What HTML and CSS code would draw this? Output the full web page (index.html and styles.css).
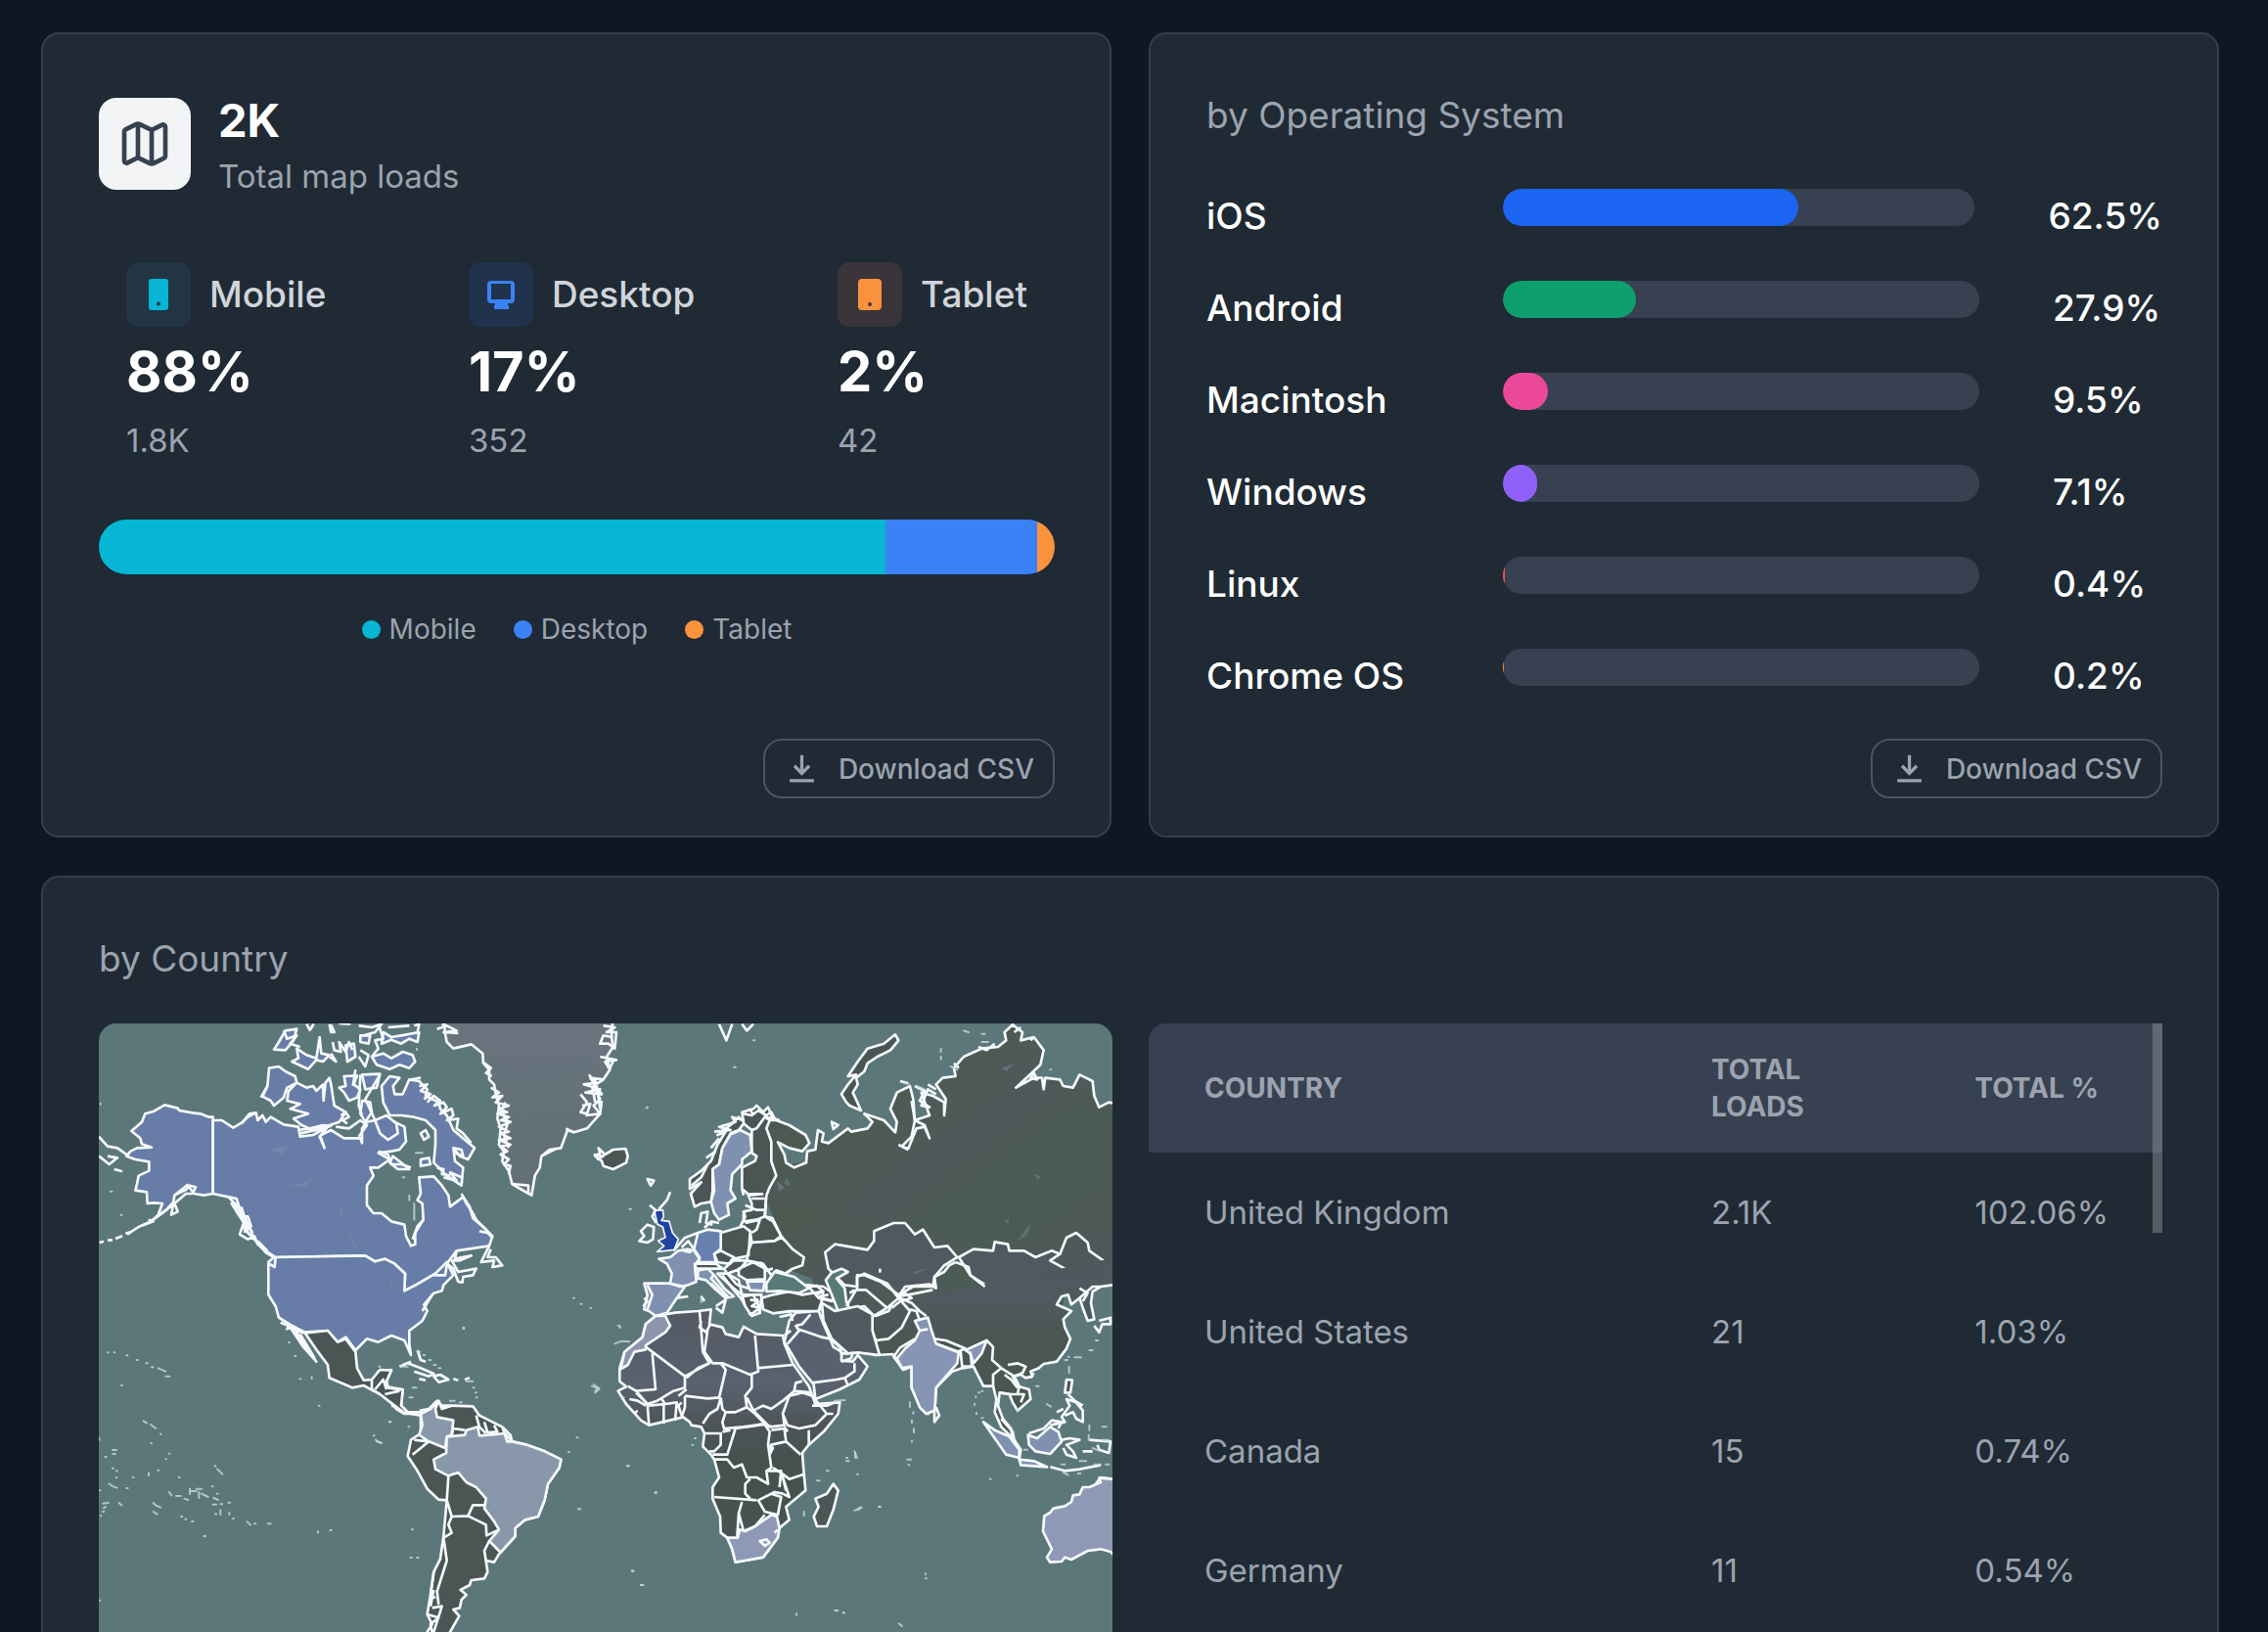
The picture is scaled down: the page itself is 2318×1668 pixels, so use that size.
FILE: index.html
```html
<!DOCTYPE html>
<html lang="en">
<head>
<meta charset="utf-8">
<meta name="viewport" content="width=device-width, initial-scale=1">
<title>Map loads</title>
<link rel="stylesheet" href="styles.css">
</head>
<body>
<svg class="defs" aria-hidden="true">
  <symbol id="i-download" viewBox="0 0 24 24"><path d="M12 2V15M6.500 10l5.500 5.500L17.500 10M3 21h18" fill="none" stroke="currentColor" stroke-width="2.400"/></symbol>
</svg>
<main class="page">
  <section class="card">
    <header class="summary">
      <span class="summary-icon">
        <svg viewBox="0 0 24 24" aria-hidden="true"><path d="M14.106 5.553a2 2 0 0 0 1.788 0l3.659-1.830A1 1 0 0 1 21 4.619v12.764a1 1 0 0 1-.553.894l-4.553 2.277a2 2 0 0 1-1.788 0l-4.212-2.106a2 2 0 0 0-1.788 0l-3.659 1.830A1 1 0 0 1 3 19.381V6.618a1 1 0 0 1 .553-.894l4.553-2.277a2 2 0 0 1 1.788 0zM15 5.764v15M9 3.236v15"/></svg>
      </span>
      <div>
        <h2 class="summary-value">2K</h2>
        <p class="muted">Total map loads</p>
      </div>
    </header>
    <div class="stats">
      <div class="stat">
        <div class="stat-head"><span class="tile tile-mobile"><svg viewBox="0 0 38 38" aria-hidden="true"><path fill-rule="evenodd" d="M12 3h14a3 3 0 0 1 3 3v26a3 3 0 0 1-3 3H12a3 3 0 0 1-3-3V6a3 3 0 0 1 3-3zm7 23.500a2 2 0 1 0 0 4 2 2 0 0 0 0-4z"/></svg></span>Mobile</div>
        <strong class="stat-value">88%</strong>
        <span class="muted">1.8K</span>
      </div>
      <div class="stat">
        <div class="stat-head"><span class="tile tile-desktop"><svg viewBox="0 0 38 38" aria-hidden="true"><path fill-rule="evenodd" d="M9 5h20a4 4 0 0 1 4 4v15a4 4 0 0 1-4 4h-3v2h1v4H12v-4h1v-2H9a4 4 0 0 1-4-4V9a4 4 0 0 1 4-4zm0 3v16h20V8z"/></svg></span>Desktop</div>
        <strong class="stat-value">17%</strong>
        <span class="muted">352</span>
      </div>
      <div class="stat">
        <div class="stat-head"><span class="tile tile-tablet"><svg viewBox="0 0 38 38" aria-hidden="true"><path fill-rule="evenodd" d="M11 3h16a4 4 0 0 1 4 4v24a4 4 0 0 1-4 4H11a4 4 0 0 1-4-4V7a4 4 0 0 1 4-4zm8 24a2 2 0 1 0 0 4 2 2 0 0 0 0-4z"/></svg></span>Tablet</div>
        <strong class="stat-value">2%</strong>
        <span class="muted">42</span>
      </div>
    </div>
    <div class="split-bar">
      <span class="bg-mobile" style="flex-grow:88"></span>
      <span class="bg-desktop" style="flex-grow:17"></span>
      <span class="bg-tablet" style="flex-grow:2"></span>
    </div>
    <ul class="legend">
      <li><i class="dot bg-mobile"></i>Mobile</li>
      <li><i class="dot bg-desktop"></i>Desktop</li>
      <li><i class="dot bg-tablet"></i>Tablet</li>
    </ul>
    <button class="download" type="button"><svg aria-hidden="true"><use href="#i-download"/></svg>Download CSV</button>
  </section>

  <section class="card">
    <h2 class="card-title">by Operating System</h2>
    <ul class="os-list">
      <li><span class="os-name">iOS</span><span class="track"><span class="fill ios" style="width:62.5%"></span></span><span class="os-share">62.5%</span></li>
      <li><span class="os-name">Android</span><span class="track"><span class="fill android" style="width:27.9%"></span></span><span class="os-share">27.9%</span></li>
      <li><span class="os-name">Macintosh</span><span class="track"><span class="fill mac" style="width:9.5%"></span></span><span class="os-share">9.5%</span></li>
      <li><span class="os-name">Windows</span><span class="track"><span class="fill windows" style="width:7.1%"></span></span><span class="os-share">7.1%</span></li>
      <li><span class="os-name">Linux</span><span class="track"><span class="fill linux" style="width:0.4%"></span></span><span class="os-share">0.4%</span></li>
      <li><span class="os-name">Chrome OS</span><span class="track"><span class="fill chrome" style="width:0.2%"></span></span><span class="os-share">0.2%</span></li>
    </ul>
    <button class="download" type="button"><svg aria-hidden="true"><use href="#i-download"/></svg>Download CSV</button>
  </section>

  <section class="card card-wide">
    <h2 class="card-title">by Country</h2>
    <div class="country">
      <svg class="map" viewBox="33 48 3108 2100" role="img" aria-label="World map of loads by country">
        <defs>
          <linearGradient id="steppe" x1="0" y1="0" x2="1" y2="1"><stop offset="0" stop-color="#4b5752"/><stop offset=".3" stop-color="#4c5a52"/><stop offset=".5" stop-color="#4e5a5a"/><stop offset=".65" stop-color="#4c5b54"/><stop offset="1" stop-color="#4d585a"/></linearGradient>
          <linearGradient id="asia" x1="0" y1="0" x2="0" y2="1"><stop offset="0" stop-color="#4e595e"/><stop offset=".25" stop-color="#4e5a5e"/><stop offset=".5" stop-color="#4a5651"/><stop offset="1" stop-color="#4a5651"/></linearGradient>
          <linearGradient id="africa" x1="0" y1="0" x2="0" y2="1"><stop offset="0" stop-color="#535a64"/><stop offset=".3" stop-color="#5a6170"/><stop offset=".45" stop-color="#4d5559"/><stop offset=".6" stop-color="#46514d"/><stop offset="1" stop-color="#485452"/></linearGradient>
          <linearGradient id="ice" x1="0" y1="0" x2="0" y2="1"><stop offset="0" stop-color="#69747f"/><stop offset="1" stop-color="#626f74"/></linearGradient>
        </defs>

        <!-- North America -->
        <g class="land blue">
          <path d="M383 335L370 335 345 325 320 322 280 315 275 308 235 298 200 318 175 325 165 350 133 378 160 400 165 418 195 428 150 430 130 440 118 455 145 465 187 472 187 500 155 515 150 540 145 560 180 565 182 600 200 598 228 600 215 635 200 650 240 620 262 595 265 575 305 543 325 570 355 575 383 570z"/>
          <path d="M383 345L410 345 445 368 475 350 490 335 515 322 520 345 535 330 545 350 560 335 600 358 645 365 650 395 690 390 735 365 710 395 725 430 712 392 745 375 785 400 835 400 840 415 840 370 855 350 880 345 900 390 925 400 945 380 940 350 970 365 975 410 955 435 930 440 890 445 925 465 890 490 865 490 875 515 855 545 855 605 875 630 900 630 930 655 970 665 975 700 990 730 1003 725 1003 690 1028 650 1025 600 1010 590 1020 570 1015 520 1060 517 1085 545 1105 575 1110 610 1150 580 1170 610 1180 645 1215 675 1240 700 1230 730 1130 745 1100 785 1065 815 1005 850 970 868 972 815 940 785 910 770 880 778 850 760 570 765 545 750 510 710 480 640 450 600 430 580 383 570z"/>
          <path d="M570 765L850 760 880 778 910 770 940 785 972 815 970 868 1005 850 1065 815 1100 780 1120 820 1090 850 1085 868 1060 875 1030 910 1040 930 1025 960 985 990 985 1030 990 1065 970 1020 930 1005 890 1025 855 1015 820 1050 790 1010 765 1025 735 990 665 995 620 972 585 950 575 915 553 880 553 780z"/>
          <path d="M555 185L585 180 605 195 635 210 640 230 610 245 600 275 570 300 560 285 535 272 550 240zM640 230L670 245 690 240 700 255 720 235 722 285 728 230 740 215 745 235 755 300 790 320 770 350 740 360 690 375 655 360 630 340 675 325 620 310 650 295 610 285 615 255zM770 245L790 240 785 210 825 208 815 235 835 250 825 275 800 285 785 260zM840 205L895 203 885 245 850 250zM840 285L865 290 870 320 850 350 835 325zM900 240L925 210 955 215 935 240 940 265 965 265 985 220 1015 225 1040 250 1035 270 1075 290 1080 310 1100 330 1120 375 1185 430 1165 465 1140 455 1120 430 1125 470 1150 490 1145 545 1100 515 1060 475 1065 420 1065 375 1035 345 1000 335 960 330 925 330 905 290z"/>
          <path d="M870 150L905 140 930 155 965 135 995 145 1003 165 985 185 955 175 925 188 885 175zM905 75L930 90 960 85 1015 75 1010 105 985 95 960 110 930 98 900 110zM605 70L640 65 630 100 605 130 570 128 585 105zM640 125L670 145 700 155 710 90 715 140 740 145 720 165 700 160 675 188 625 165 645 155zM790 115L815 110 820 150 795 165zM835 85L865 85 860 110 835 105zM880 345L915 330 945 355 950 385 920 405 895 385z"/>
          <path d="M935 455L960 475 985 495 950 495 925 475zM1020 465L1045 460 1050 480 1020 485z"/>
        </g>
        <g class="line">
          <path d="M35 720L48 716M60 713L75 712M84 708L105 700M115 692L130 688 155 672 185 658 205 645 240 620 265 600 275 625 255 635 262 598M165 668L200 655 185 650M120 695L135 685M265 575L300 558 312 545 330 550 320 570 300 570 265 600M33 395L60 425 90 430 125 455M33 455L65 480 90 460 60 455M80 495L105 502"/>
          <path d="M430 580L455 585 465 615 440 600 465 640 490 640 500 670 475 665 465 695 490 710 510 700 520 725 545 745 575 765 572 795 555 785M470 610L485 660 505 690M450 600L480 650 490 690 530 730M455 625L475 655 482 690M520 715L550 745"/>
          <path d="M645 375L680 370 720 360 745 362 700 375 650 385M760 365L800 370 835 345 855 360 830 395M775 330L790 320 800 335 780 345 795 355M835 205L830 300 840 330M895 205L850 280 880 345M1040 290L1060 270 1080 285 1062 300 1090 290 1100 305 1080 325 1115 310 1120 330 1100 345 1135 340 1130 370 1150 385 1175 415"/>
          <path d="M1015 240L1040 235 1020 255 1050 265 1030 280M990 220L1020 215M890 440L920 450 930 480 960 480 990 490M1090 520L1130 530 1110 505 1145 520M1035 375L1045 395 1030 405 1020 385zM1070 490L1090 495 1085 510 1110 515"/>
          <path d="M1200 685L1225 690 1240 705M1230 730L1205 780 1245 775 1240 795 1270 790 1250 765 1225 765 1235 740M1130 745L1125 770 1175 760 1140 775 1115 775 1135 810 1190 800 1180 820 1150 825 1148 842 1135 840 1120 800 1100 785M1060 820L1095 820 1100 790M1120 430L1145 435 1150 455 1125 445M1028 650L1010 670 995 710M1025 930L1055 880"/>
          <path d="M600 70L610 95 640 85 620 110 650 120M670 50L680 68 692 50M740 50L745 75 755 75 745 52M770 48L805 50M830 55L870 60 900 50 880 75 845 85M890 50L905 95 880 100 890 125 870 150M750 105L755 130 775 135 770 105 790 135 800 105 810 130M740 150L760 165 745 140M835 130L860 145 850 180 830 150M1000 55L1015 50 1010 75M920 60L985 55"/>
          <path d="M820 190L812 240M550 240L530 275M470 355L495 325 515 322M1145 570L1160 600 1180 630 1190 650 1220 680"/>
        </g>
        <g transform="translate(-30 900)">
          <path class="land dark" d="M650 80L695 97 765 90 795 125 820 115 850 155 855 205 875 242 905 240 920 215 960 210 945 245 945 262 995 270 990 320 1015 345 1000 345 975 330 935 280 905 275 875 258 840 265 770 235 765 195 735 155 695 97 665 90 730 185 690 140z"/>
          <path class="line" d="M905 275L930 240 950 265 935 285 990 275M940 285L965 295 990 275M960 320L990 325M680 100L710 150 725 175M620 65L645 75 640 85 655 80"/>
        </g>

        <!-- South America and the Caribbean -->
        <g transform="translate(870 930)">
          <path class="land dark" d="M150 305L175 300 200 275 215 290 245 290 310 292 330 320 370 340 400 355 425 380 430 400 475 410 530 430 580 455 575 480 540 530 530 580 510 630 470 640 440 665 440 690 390 745 375 770 350 765 355 800 345 820 305 825 300 840 272 855 290 870 275 885 270 910 250 915 268 935 240 984 200 1100 170 1100 170 984 185 960 170 930 180 870 190 800 210 760 220 690 230 580 205 578 170 545 140 490 110 445 120 395 150 375 150 330z"/>
          <path class="land pale" d="M150 315L180 300 205 275 195 300 200 325 250 335 245 380 230 385 225 420 175 400 145 380 155 350zM230 385L285 380 290 365 325 355 330 382 410 375 430 400 475 410 530 430 580 455 575 480 540 530 530 580 510 630 470 640 440 665 440 690 395 740 360 705 390 670 375 645 345 605 350 575 320 540 290 525 265 495 235 505 195 485 190 455 228 435z"/>
          <path class="line" d="M125 440L175 400 130 395M235 505L230 580 245 630 295 628 310 595 345 595M295 628L350 655 352 688 390 670M245 630L235 655 245 680 220 695 230 765 200 860 205 900M185 910L215 905 190 984M170 930L205 940 180 960 185 984M360 705L345 735 350 765M285 365L250 360 245 380M320 320L330 355 350 375M345 340L355 372 385 370 375 350M400 355L415 400 435 400M205 275L215 300 245 290M190 800L180 870 195 880M190 855L180 905"/>
          <path class="land dark" d="M0 210L25 180 60 182 45 215 50 235 95 242 90 290 110 310 150 310 150 320 100 312 70 290 25 255 0 240z"/>
          <path class="line" d="M10 240L35 210 45 240M40 255L85 245M85 170L110 160 150 175 190 192 175 200 130 185M145 208L165 212M190 200L210 195 235 210 205 218zM250 208L265 212M285 210L300 205M95 165L120 155M140 120L150 150 165 155"/>
          <path class="specks" d="M290 215h20M310 235h4M318 250h3M320 265h3M175 150h6M190 165h6M205 175h6M140 125h8M158 135h5M125 235h12M115 265h10M240 275h14M270 280h6M12 395l14 10M55 340h3M112 355h3M628 388h4M603 432h3M785 475h4M870 555h3M632 607h8M123 670h3M118 756h5M138 756h5M798 797h5M825 840h4M280 50h3M680 225l15 10-10 10"/>
        </g>

        <!-- Greenland, Iceland and Europe -->
        <g transform="translate(1050 0)">
          <path class="land ice" d="M40 20L45 80 50 105 70 125 125 112 160 140 162 170 180 190 180 220 195 235 200 265 210 300 205 340 215 370 210 420 225 440 220 470 240 500 250 540 275 555 310 575 320 515 335 490 340 455 365 435 400 430 420 375 440 382 480 370 520 325 500 300 520 280 500 240 530 220 550 190 540 150 560 120 555 90 560 20z"/>
          <path class="line" d="M20 65L50 55 80 70 40 75 85 78M35 50L60 60M165 170L185 185 170 200 188 210M185 245L210 260 190 275 220 270 200 290 240 300 210 310 235 320 205 325 240 335 215 345 245 350 210 365 240 380 215 385 245 400 210 405 245 420 215 425 235 440 215 450 240 465 225 480 245 485 240 510M230 290L215 320 238 350 225 390 240 430M250 540L300 545 300 572M340 455L370 440 385 432M415 370L440 382M460 265L480 290 460 320 480 325 490 295 465 300M475 330L520 325 525 285M485 205L510 230 470 235 520 250 475 260 525 265 490 215 530 220M520 150L570 160 535 165 550 190M530 55L565 60 540 75 570 75 565 125 545 110 520 110 530 85 560 90M510 240L520 310M495 240L505 290M560 165L550 185"/>
          <path class="land dark" d="M505 455L525 470 530 485 560 495 600 475 605 455 598 432 560 435 535 450 515 430 520 445z"/>
          <path class="line" d="M500 450L530 455 510 465M885 50L907 100 925 50M955 50L970 70 990 50M665 525L685 530 675 545z"/>
          <path class="land dark" d="M795 525L830 500 860 470 880 420 905 380 880 390 925 355 945 335 960 350 955 320 990 310 1000 300 1020 320 1035 305 1050 340 1025 335 1000 372 985 375 960 355 945 375 920 385 895 430 885 480 865 495 865 560 860 595 830 600 810 610 798 570 830 535 795 555z"/>
          <path class="land dark" d="M985 375L1000 370 1025 335 1040 345 1035 370 1045 410 1045 470 1060 515 1040 550 1020 570 975 572 955 555 955 490 995 470 1000 455 985 445z"/>
          <path class="land soft" d="M920 388L950 375 980 390 985 440 955 465 955 480 925 510 920 560 935 585 910 600 915 635 885 650 870 630 860 595 870 560 865 495 885 480 895 430z"/>
          <path class="line" d="M870 380L920 375 885 365 935 350 925 335 960 345M860 430L885 400M800 545L830 520 850 480M845 460L875 440M960 325L985 330 1005 315 1030 330 1045 320 1055 340M975 310L990 325M825 660L830 630 850 625 845 660 865 665M840 675L860 655 885 660M955 555L960 575"/>
          <path class="land dark" d="M975 575L1030 570 1025 640 1050 645 1075 700 1055 715 985 720 980 685 950 670 965 640 960 625 985 620 985 600z"/>
          <path class="land dark" d="M890 690L960 670 980 685 975 760 930 770 890 745zM985 720L1055 715 1075 705 1145 755 1145 785 1110 800 1090 815 1060 805 1045 820 1020 785 970 775 975 745z"/>
          <path class="line" d="M985 585L1025 585M965 605L1000 620 1025 620M960 625L960 655 1000 650 1025 640M965 660L1010 650 1000 680 985 690"/>
          <path class="land mid" d="M820 690L850 680 890 685 890 740 870 755 875 780 820 780 825 765 808 740z"/>
          <path class="land soft" d="M700 770L735 765 760 745 790 740 808 745 825 770 810 790 815 840 790 850 765 855 735 845 740 815 725 785zM655 845L730 845 780 855 755 890 725 935 690 945 670 930 655 925 665 880zM820 805L850 800 870 820 900 860 930 885 905 890 870 860 845 835 820 830z"/>
          <path class="land dark" d="M870 755L890 745 930 765 915 785 880 780zM810 785L875 785 895 800 815 800zM900 800L930 775 970 775 950 800 910 815zM945 800L990 780 1025 800 1025 832 970 835 945 820zM880 815L910 815 945 835 955 880 930 860zM955 880L1015 880 1010 935 985 945 965 915z"/>
          <path class="land soft" d="M970 840L1025 838 1020 868 980 866z"/>
          <path class="line" d="M745 745L780 705 820 690M770 735L790 715 808 740M775 745L800 750M665 850L680 880 665 925M655 890L665 900 652 915M875 915L905 895 895 935 875 920M905 890L885 870 860 845M895 820L925 860 955 895 965 915M910 815L940 850M980 895L1005 900 985 915 1010 920 990 935 975 940M960 885L990 880 1000 905M1000 890L1010 940M870 815L860 830 915 890M755 890L790 885M830 885L840 900M940 850L975 860M1010 780L1030 805 1050 800"/>
          <path class="uk" d="M686 622L712 620 715 640 708 652 732 655 742 690 760 710 747 742 695 748 716 730 698 715 720 704 712 672 696 664z"/>
          <path class="line" d="M672 605L690 620 680 640 692 660M700 618L725 590 735 565M645 685L665 665 685 672 682 710 665 720 640 715 655 700z"/>
          <path class="land dark" d="M1020 890L1060 880 1100 865 1140 880 1190 880 1195 925 1120 930 1060 935 1025 925z"/>
        </g>

        <!-- Asia -->
        <path class="steppe" d="M2040 500L3190 300 3190 840 3000 860 2960 1040 2560 1030 2440 960 2235 900 2220 830 2140 800 2150 740 2100 640z"/>
        <g transform="translate(1590 0)">
          <path class="land steppe" d="M490 575L500 550 520 515 505 470 505 410 490 370 500 345 520 345 560 360 610 390 622 415 600 440 560 430 525 412 545 450 550 475 575 490 612 475 615 440 640 435 648 375 665 385 660 410 680 415 740 370 750 380 800 370 815 350 790 325 850 345 885 382 890 350 870 310 890 260 930 240 940 280 945 345 990 330 965 260 1000 270 1035 290 1035 330 1040 280 1010 235 1030 215 1070 210 1065 185 1095 150 1150 125 1200 120 1225 100 1220 75 1245 52 1275 75 1270 100 1310 90 1340 130 1330 175 1255 245 1310 215 1335 215 1340 250 1345 215 1390 220 1400 240 1430 245 1450 205 1490 225 1495 270 1510 305 1540 290 1570 295 1600 850"/>
          <path class="line" d="M490 575L485 640 510 655 535 700 570 740 605 765 600 790 570 800 540 820 575 830 615 855 665 870M935 285L945 345 935 395 905 425 925 432 950 370 975 365 990 400 975 360 945 345M895 420L925 435M945 240L975 255 960 285 990 305 965 300 985 250 1010 265M985 235L1010 250M1270 60L1250 75M1310 90L1300 100M1310 200L1320 220 1300 215zM1140 120L1165 130 1190 110M1065 170L1080 185M500 335L530 345M690 350L710 360 695 372zM900 225L925 232"/>
          <path class="land dark" d="M720 265L740 235 765 205 740 210 770 165 800 125 850 110 885 82 895 100 870 130 830 150 800 170 790 195 765 215 770 235 755 260 780 315 745 300 735 290z"/>
          <path class="land dark" d="M475 890L510 880 560 870 600 880 660 870 665 880 650 930 560 930 510 937 480 925zM615 850L665 855 700 880 690 900 650 890z"/>
          <path class="line" d="M640 850L665 870 640 880M660 890L700 900 720 935M650 885L680 880"/>
          <path class="sea" d="M490 845L515 810 575 825 620 860 590 875 530 868 490 870z"/>
          <path class="land grey" d="M820 685L880 660 915 660 945 695 970 680 1005 735 1045 730 1075 765 1035 790 1005 825 1000 855 940 855 895 880 840 840 790 820 768 820 768 855 730 850 680 800 670 750 700 725 800 742 820 715z"/>
          <path class="land grey" d="M1080 765L1125 740 1185 745 1190 718 1230 725 1235 745 1280 745 1315 765 1365 745 1390 755 1360 775 1405 800 1330 825 1310 855 1245 870 1170 855 1115 820z"/>
          <path class="line" d="M1390 755L1410 705 1440 690 1475 720 1480 745 1530 780 1570 772M1510 850L1520 820 1560 800"/>
          <path class="sea" d="M690 812L720 800 740 810 705 830 730 860 735 900 745 925 710 930 690 880 672 835z"/>
          <path class="line" d="M838 800V812"/>
        </g>
        <g transform="translate(2250 780)">
          <path class="land asia" d="M930 -20L930 60 890 70 855 75 830 90 825 125 835 175 815 180 800 140 790 110 765 130 755 100 735 105 720 130 765 150 740 175 745 200 762 235 750 265 720 305 680 312 665 325 640 335 645 350 625 355 610 345 585 350 600 380 635 390 640 420 600 455 585 430 575 405 545 400 540 440 555 480 580 510 585 540 550 505 530 460 535 420 525 380 495 380 465 320 430 325 400 335 350 385 347 440 325 465 305 450 275 385 275 320 250 330 218 282 165 285 110 275 75 270 35 235 0 190 5 150 50 155"/>
          <path class="line" d="M1050 -60L1050 -60M410 0L450 15 455 40 500 75"/>
          <path class="land india" d="M285 180L325 170 335 205 350 250 420 275 415 310 350 385 347 440 345 455 320 465 300 445 275 385 275 320 245 325 230 295 255 265 285 240 300 210zM440 270L505 240 490 280 465 310 455 280z"/>
          <path class="line" d="M345 235L380 240 440 265 415 275 350 250M300 210L325 205M425 270L430 320 460 320 455 275M345 455L345 490 360 470 350 445M235 105L255 75 330 68 350 80 345 45 375 30 390 10 410 0M235 105L265 100 340 85M240 110L275 125 300 150 320 165M200 140L235 110 270 150 245 200 205 235 165 240M165 165L205 150 215 130M155 165L150 200 165 240 170 280M75 135L105 85 135 85 200 140 160 165 130 135 85 145M108 85L108 45 130 35 200 65 235 110 255 95 275 110 240 120 215 140M85 95L100 85M270 145L290 150 300 180M505 240L525 260 522 300 550 325 525 345 525 380M550 325L590 350 605 380 600 405M560 345L580 360 600 385M545 400L580 405 620 405 610 430M570 315L600 310 625 320 615 340 590 350M250 330L220 290 240 262 285 235"/>
          <path class="land dark" d="M750 360L768 362 762 400 745 400z"/>
          <path class="land soft" d="M495 490L530 515 575 535 605 575 605 600 565 590 530 540zM632 530L660 540 700 505 725 520 735 550 700 588 655 580 635 560zM605 605L650 610 690 628 610 622z"/>
          <path class="line" d="M635 525L680 510 705 485 735 490 725 510M735 545L760 540 790 545 750 560 770 580 780 600 750 590 740 570M700 500L745 490 735 475 760 440 750 420 780 430 800 455 800 490 780 480 770 460 745 470M755 405L775 425 800 440M640 355L650 340M790 110L830 75 855 75M790 80L815 95 800 120M850 180L885 170 885 190 860 190 850 215 835 195M720 460L740 450M820 545L885 550 880 585 850 575 845 560M800 580L830 580M700 628L745 640 790 635 855 622M550 480L585 520 590 545 610 575 605 605M840 680L855 660 890 665"/>
          <path class="land aus" d="M930 690L890 665 850 662 855 675 820 690 800 690 790 712 770 715 765 735 745 748 710 755 700 768 682 778 678 825 705 880 690 905 700 920 735 918 745 905 765 912 815 885 855 880 885 888 930 930z"/>
          <path class="specks" d="M740 645l15 8M785 648h8M870 620h10M820 500v15M818 530v15M830 570l20 8M860 545h20M745 300h8M775 292h20M820 270h10M840 240h6M758 320v20M755 290h3M665 380h-8M690 435l12 8M600 450v8M480 400h4M490 395h3M472 412v3M468 434v4M474 462v4M490 478h4M270 430v14M280 460v4M276 485v8M282 510v12M276 548v3M262 605h12M265 622h3M515 665h3M598 655h3M100 580l8 20M75 600h4M108 650h3M175 750h4M110 760l12-8M318 955v3M318 970h3M40 1068h5M66 1075h3M236 1108l10 8M835 620h20M620 575h10M790 610h20M735 620h10M860 505h12"/>
        </g>

        <!-- Africa and Arabia -->
        <g transform="translate(1530 900)">
          <path class="land grey" d="M720 5L760 30 830 15 875 40 875 90 897 165 830 157 800 160 750 115 725 60z"/>
          <path class="land africa-n" d="M605 125L620 60 640 35 710 30 725 70 745 115 755 140 780 155 780 182 815 185 830 165 860 200 835 240 775 270 700 300 695 255 650 200 612 135z"/>
          <path class="line" d="M645 85L690 100 720 110 745 115M615 130L650 90 640 75 660 70 685 40M690 250L765 240 790 235 820 215 820 190M790 235L800 258M590 48L625 40 630 60M605 105L625 90M745 115L775 140 780 160 800 160M780 185L810 175 815 155"/>
          <path class="land africa" d="M210 45L270 35 340 30 380 25 375 70 415 80 425 100 465 110 480 78 520 100 600 105 605 130 630 190 680 260 700 315 775 310 770 345 725 400 680 440 660 465 665 530 670 580 610 630 620 670 590 695 580 730 540 785 455 800 445 760 430 725 410 710 408 660 385 605 385 570 405 540 390 485 380 470 355 445 360 405 350 385 320 380 315 370 295 355 190 380 165 365 120 315 95 275 120 262 100 245 100 205 115 155 170 110 180 70z"/>
          <path class="land lilac" d="M210 45L240 45 255 75 240 95 180 135 180 148 145 155 125 195 103 208 115 155 170 110 180 70z"/>
          <path class="land aus" d="M430 725L462 725 468 700 485 705 515 690 565 655 582 660 590 695 585 725 540 785 455 800 445 760z"/>
          <path class="line" d="M180 140L300 230 375 190 355 155 350 90 345 30M350 60L345 80 365 95 378 70M370 85L360 155 385 190 415 190 500 225 525 215 515 105M520 205L630 195M200 160L210 270 150 275 125 260M300 225L300 265 265 275 215 305 185 315 150 280M305 235L340 205 375 190M280 290L305 270M300 290L370 298 405 295 425 210 410 190M300 290L300 325 290 355M410 295L400 330 375 345 355 375M410 295L415 330 425 340 455 340 490 325 485 290 505 265 505 225M490 295L510 335 540 320 565 330 600 305 635 275 640 250 660 245M425 340L415 370 420 390 480 385 545 375 515 345 490 325M510 335L560 385 605 380 600 340M600 345L620 290 660 280 690 290 735 345 755 345M735 345L700 380 650 390 615 380 600 345M635 275L690 280M455 390L540 378 570 385M545 378L560 400 555 440 565 510 550 520 555 560 520 540 490 540 475 500 450 510 430 485 390 485M455 390L430 470 385 470M360 405L410 405 410 440 390 460 375 460M415 400L440 395M565 395L605 390 610 430 565 440 560 470M605 385L615 400M610 430L655 470M680 395L680 440M570 510L600 530 620 545 665 530M390 600L520 610M500 545L485 560 485 590 500 605M555 520L595 520 590 570M595 525L620 600 600 590 575 585 525 610 545 645 585 655 595 600 565 590M600 540L610 580M475 615L465 650 460 725M465 650L480 705M545 655L515 690 480 705M530 735L550 730 560 740 545 750zM150 275L185 315 190 380M130 300L155 305 180 320M235 315L235 375M190 320L240 315 275 310 270 365M290 310L280 320 290 350M240 315L225 295M690 320L735 320 760 310M155 335L145 345M585 700L575 710M560 440L570 450 560 470"/>
          <path class="land dark" d="M755 560L770 580 755 640 735 690 705 690 695 660 710 630 700 605 735 590z"/>
          <path class="specks" d="M95 75h6M85 130l20-8 25 2M15 260l22 10-12 10M122 505h5M208 588h4M330 420h3M322 440h3M137 826h4M165 870h8M642 958v5M765 948h4M785 955h3M735 520h6M705 550h8M795 490h8M822 465v15M665 645v12M820 642l18-10M895 630h4M520 330h3M760 305l30-2M105 295h8"/>
        </g>

        <!-- small islands -->
        <path class="specks" d="M68 563h6M100 635h4M965 520h5M985 575v15M1000 600v50M1040 395l5 5M1005 445h20M38 293v3M1008 125v4M1716 305l-4 3M1980 182h6M2040 100h4M1660 617h5M1488 890h3M1510 908h4M1540 920h3M1630 980h3M1150 984h3M2615 125v10M2615 150v8M2685 70l15 5M2740 80h10M2740 105h20M2645 180l20 10M2950 190h3M2500 230l15 3M2540 240l25 10M1880 885v18"/>
        <g transform="translate(-30 900)">
          <path class="specks" d="M90 157h2M110 157h2M148 166h3M180 180h3M208 190h4M225 202h5M245 205l22 10M268 230h12M132 258h2M200 367l10 6M222 378l16 12M252 407h2M223 435h2M105 456h12M106 468h8M82 477h4M278 467h2M268 484h2M105 512h3M117 520h2M116 540h2M167 540h3M216 526v8M244 518h3M308 540h3M95 560l12 8 12 4M148 573h4M66 580h2M76 620l16-2M78 634l6-4M75 645h4M125 618l8 8M68 658h2M230 618l8 8 14 6M230 645l12 8M278 585l8 10M300 597h14M325 605l12 4M342 575v16M342 582h20M362 575h16M370 585v18M378 590l20 10M410 568h3M425 590h3M415 603l14 6M413 623h10M436 622h6M460 617h6M436 640v14M420 652h3M463 648v6M474 666h3M315 660h4M328 668h3M348 675h5M418 505h3M426 514l16 16M518 676l10 10M540 682h4M582 682h8M735 706v4M772 702h4M385 720h5M645 126h3M664 168h3M680 238h2M716 232v5M737 320h3M953 370h4M905 412h3M915 430l16 4M922 200h4M990 200h20M64 917h2M64 420v5"/>
        </g>
        <path class="lakes" d="M560 435l30-10 25 5-20 20zM615 545l40-5 35-20-25 30zM770 630l12-15-5 25zM795 690l30 40-5 15zM925 820l10 30-5 20zM2110 530l25 20-15 15zM2140 520l15 25-20-5zM2800 185l40-15-25 25zM2900 510l20 5-5 15zM2850 715l40-55-10 35zM2530 810l50-12-45 18zM2810 650h15l-5 15z"/>
      </svg>
      <div class="table-wrap">
        <table>
          <thead><tr><th scope="col">COUNTRY</th><th scope="col">TOTAL LOADS</th><th scope="col">TOTAL %</th></tr></thead>
          <tbody>
            <tr><td>United Kingdom</td><td>2.1K</td><td>102.06%</td></tr>
            <tr><td>United States</td><td>21</td><td>1.03%</td></tr>
            <tr><td>Canada</td><td>15</td><td>0.74%</td></tr>
            <tr><td>Germany</td><td>11</td><td>0.54%</td></tr>
          </tbody>
        </table>
        <span class="thumb"></span>
      </div>
    </div>
  </section>
</main>
</body>
</html>
```
FILE: styles.css
```css
* { box-sizing: border-box; margin: 0; padding: 0; }

body {
  background: #0f1722;
  color: #fff;
  font-family: Inter, "Liberation Sans", sans-serif;
  font-size: 33px;
  line-height: 48px;
}

ul { list-style: none; }
.defs { display: none; }

.page {
  display: grid;
  grid-template-columns: minmax(0, 1fr) minmax(0, 1fr);
  gap: 39px 38px;
  height: 100vh;
  overflow: hidden;
  padding: 33px 50px 0 42px;
}

.card {
  display: flex;
  flex-direction: column;
  background: #1f2a34;
  border: 2px solid #333f49;
  border-radius: 18px;
  padding: 55px 56px 38px 57px;
}
.card-wide { grid-column: 1 / -1; }

.card-title {
  color: #9ca3af;
  font-size: 37px;
  font-weight: 400;
  line-height: 56px;
}
.muted { color: #9ca3af; }

/* Summary */
.summary { display: flex; align-items: center; gap: 28px; }
.summary-icon {
  display: grid;
  place-items: center;
  width: 94px;
  height: 94px;
  border-radius: 18px;
  background: #f3f4f6;
}
.summary-icon svg {
  width: 56px;
  height: 56px;
  fill: none;
  stroke: #374151;
  stroke-width: 2;
  stroke-linecap: round;
  stroke-linejoin: round;
}
.summary-value { font-size: 47px; font-weight: 700; line-height: 66px; }

.stats {
  display: flex;
  justify-content: space-between;
  margin-top: 64px;
  padding: 0 28px;
}
.stat { display: flex; flex-direction: column; gap: 8px; }
.stat-head {
  display: flex;
  align-items: center;
  gap: 19px;
  color: #d1d5db;
  font-size: 37px;
  font-weight: 500;
}
.stat-value { font-size: 56px; font-weight: 700; line-height: 76px; }

.tile {
  display: grid;
  place-items: center;
  width: 66px;
  height: 66px;
  border-radius: 12px;
}
.tile svg { width: 38px; height: 38px; fill: currentColor; }
.tile-mobile { background: #213544; color: #06b6d4; }
.tile-desktop { background: #20324c; color: #3b82f6; }
.tile-tablet { background: #39353a; color: #fb923c; }

.bg-mobile { background: #06b6d4; }
.bg-desktop { background: #3b82f6; }
.bg-tablet { background: #fb923c; }

.split-bar {
  display: flex;
  height: 56px;
  margin-top: 57px;
  border-radius: 28px;
  overflow: hidden;
}

.legend {
  display: flex;
  justify-content: center;
  gap: 38px;
  margin-top: 37px;
  color: #9ca3af;
  font-size: 28px;
  line-height: 38px;
}
.legend li { display: flex; align-items: center; gap: 9px; }
.dot { width: 19px; height: 19px; border-radius: 50%; }

.download {
  display: flex;
  align-items: center;
  align-self: flex-end;
  gap: 19px;
  height: 61px;
  margin-top: auto;
  padding: 0 19px;
  border: 2px solid #4b5563;
  border-radius: 19px;
  background: none;
  color: #9ca3af;
  font: 500 28px/38px Inter, "Liberation Sans", sans-serif;
}
.download svg { width: 37px; height: 37px; padding: 2px; }

/* Operating systems */
.os-list {
  display: flex;
  flex-direction: column;
  gap: 38px;
  margin: 47px 0 36px;
  font-size: 37px;
  font-weight: 500;
  line-height: 56px;
}
.os-list li { display: flex; }
.os-name { width: 303px; }
.track {
  flex: 1;
  height: 38px;
  border-radius: 19px;
  background: #374151;
  overflow: hidden;
}
.fill { display: block; height: 100%; border-radius: 19px; }
.os-share { min-width: 112px; margin-left: 75px; }
.ios { background: #1c64f2; }
.android { background: #0e9f6e; }
.mac { background: #ec4899; }
.windows { background: #9061f9; }
.linux { background: #f05252; }
.chrome { background: #fb923c; }

/* Countries */
.country {
  display: grid;
  grid-template-columns: minmax(0, 1fr) minmax(0, 1fr);
  gap: 37px;
  align-items: start;
  margin-top: 38px;
}
.map { display: block; width: 100%; border-radius: 18px; background: #5c777a; }
.map .land, .map .line, .map .uk, .map .sea {
  stroke: #f4f9fd;
  stroke-width: 8;
  stroke-linejoin: round;
}
.map .line { fill: none; }
.map .uk { stroke-width: 5; }
.blue { fill: #677da7; }
.dark { fill: #4b5654; }
.grey { fill: #50595f; }
.steppe { fill: url(#steppe); }
.asia { fill: url(#asia); }
.africa { fill: url(#africa); }
.africa-n { fill: #596170; }
.ice { fill: url(#ice); }
.soft { fill: #8090b0; }
.pale { fill: #8997aa; }
.lilac { fill: #8d95ad; }
.india { fill: #8595b3; }
.aus { fill: #8f99b6; }
.mid { fill: #6780b0; }
.uk { fill: #2143a0; }
.sea { fill: #587a77; }
.specks { fill: none; stroke: #c3dadd; stroke-width: 6; stroke-linecap: round; opacity: .8; }
.lakes { fill: #7f94b4; opacity: .4; }

.table-wrap { position: relative; overflow: hidden; border-radius: 18px 0 0 0; }
table { width: 100%; border-collapse: collapse; table-layout: fixed; color: #9ca3af; }
th, td { text-align: left; padding: 37px 0 37px 57px; }
th {
  padding: 28px 57px 28px 57px;
  background: #374151;
  font-size: 28px;
  font-weight: 700;
  line-height: 38px;
}
th:nth-child(1) { width: 50%; }
th:nth-child(2) { width: 26%; }
th:nth-child(3) { width: 24%; white-space: nowrap; }
.thumb {
  position: absolute;
  top: 0;
  right: 0;
  width: 10px;
  height: 214px;
  background: #8a8f96;
  opacity: .5;
}
```
